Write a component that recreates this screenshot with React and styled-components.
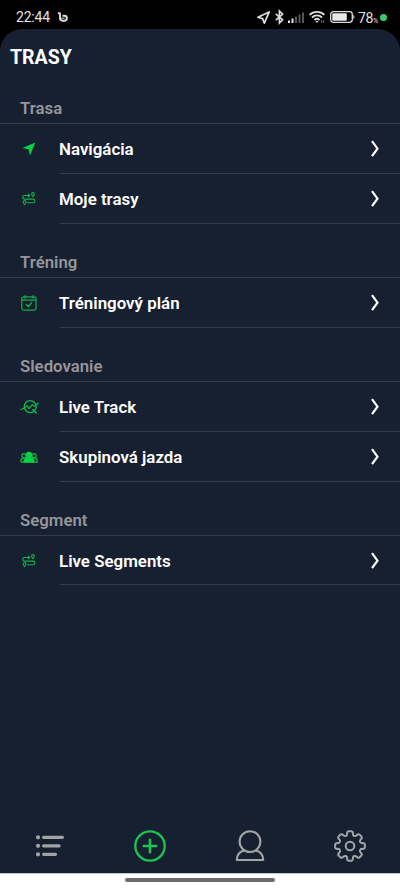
import React from 'react';
import styled, { createGlobalStyle } from 'styled-components';

const GREEN = '#06d445';
const GREY = '#a3a4a8';

const GlobalStyle = createGlobalStyle`
  * { box-sizing: border-box; }
  html, body { margin: 0; background: #000; }
  body { font-family: Roboto, "Liberation Sans", sans-serif; }
  svg { display: block; flex: none; overflow: visible; }
`;

const Screen = styled.div`
  width: 400px;
  height: 889px;
  display: flex;
  flex-direction: column;
  background: #000;
  overflow: hidden;
`;

const StatusBar = styled.header`
  height: 29px;
  flex: none;
  display: flex;
  align-items: center;
  justify-content: space-between;
  padding: 5px 13px 0 16px;
  color: #e2e2e2;
`;

const ClockGroup = styled.div`
  display: flex;
  align-items: center;
  gap: 8px;
`;

const DeviceGroup = styled.div`
  display: grid;
  grid-template-columns: 18px 13px 21px 21px 28px 22px 7px;
  align-items: center;
`;

const Clock = styled.span`
  font-size: 14px;
  line-height: 16px;
  width: 34px;
  letter-spacing: -0.2px;
`;

const Charge = styled.span`
  height: 16px;
  font-size: 14px;
  line-height: 18px;
  letter-spacing: -0.4px;
  white-space: nowrap;
  small { font-size: 7px; letter-spacing: 0; }
`;

const ActiveDot = styled.i`
  width: 7px;
  height: 7px;
  border-radius: 50%;
  background: #3ccb6c;
`;

const Panel = styled.main`
  height: 844px;
  flex: none;
  display: flex;
  flex-direction: column;
  background: #172030;
  border-radius: 22px 22px 0 0;
`;

const Title = styled.h1`
  margin: 0;
  padding: 17px 10px 0;
  height: 54px;
  color: #fff;
  font-size: 19.5px;
  font-weight: 700;
  line-height: 24px;
`;

const Section = styled.section`
  display: flex;
  flex-direction: column;
`;

const SectionTitle = styled.h2`
  margin: 0;
  height: ${(p) => (p.$first ? 41 : 54)}px;
  padding: 0 20px 5px;
  display: flex;
  align-items: flex-end;
  border-bottom: 1px solid #343c4a;
  color: #94969a;
  font-size: 16.8px;
  font-weight: 600;
  line-height: 20px;
`;

const Row = styled.div`
  height: ${(p) => p.$height || 50}px;
  display: grid;
  grid-template-columns: 59px 1fr;
  grid-template-rows: 100%;
`;

const RowIcon = styled.div`
  height: 50px;
  padding-right: 1px;
  display: flex;
  align-items: center;
  justify-content: center;
`;

const RowBody = styled.div`
  margin-left: 1px;
  padding: 15px 20px 0 0;
  display: flex;
  align-items: flex-start;
  justify-content: space-between;
  border-bottom: 1px solid #343c4a;
`;

const Label = styled.span`
  margin-left: -1px;
  color: #fff;
  font-size: 16.9px;
  font-weight: 600;
  line-height: 20px;
`;

const TabBar = styled.nav`
  margin-top: auto;
  height: 55px;
  display: grid;
  grid-template-columns: repeat(4, 1fr);
  align-items: center;
  justify-items: center;
`;

const HomeArea = styled.footer`
  height: 16px;
  flex: none;
  display: flex;
  justify-content: center;
  align-items: flex-start;
  padding-top: 4px;
  border-top: 1px solid #c4c6c9;
  background: #fff;
`;

const HomeHandle = styled.div`
  width: 150px;
  height: 4px;
  border-radius: 2px;
  background: #6c6c6c;
`;

const AppGlyph = () => (
  <svg width="11" height="10" viewBox="0 0 11 10" fill="none" stroke="#dedede" strokeWidth="1.9">
    <path d="M0 .8 2 1.5v5.2Q2.3 8.7 5 8.7h1.3a2.6 2.5 0 0 0 0-5H4.5" />
    <path d="M2 6.2h4.6" strokeWidth="1" />
  </svg>
);

const LocationIcon = () => (
  <svg width="13" height="13" viewBox="0 0 13 13" fill="none" stroke="#dedede" strokeWidth="1.7" strokeLinejoin="round">
    <path d="M12.2.9.9 6.2l4.7 1.4 1.8 4.6Z" />
  </svg>
);

const BluetoothIcon = () => (
  <svg width="9" height="14" viewBox="0 0 9 14" fill="none" stroke="#dedede" strokeWidth="1.6">
    <path d="m.8 3.8 6.8 6L4.4 13V1l3.2 3.2-6.8 6" />
  </svg>
);

const SignalIcon = () => (
  <svg width="16" height="11" viewBox="0 0 16 11">
    <path fill="#e5e5e5" d="M0 8.5h2V11H0zM3.5 6.5h2V11h-2z" />
    <path fill="#555" d="M7 4.5h2V11H7zM10.5 2.5h2V11h-2zM14 .5h2V11h-2z" />
  </svg>
);

const WifiIcon = () => (
  <svg width="16" height="12" viewBox="0 0 16 12" fill="none" stroke="#dedede" strokeWidth="1.8">
    <path d="M.6 3.8a10.7 10.7 0 0 1 14.8 0M3 6.5a7 7 0 0 1 10 0M5.4 9a3.8 3.8 0 0 1 5.2 0" />
    <path d="m6.4 10 1.6 2 1.6-2Z" fill="#dedede" stroke="none" />
    <path d="M12.6 9.2v2.6M14.6 9.2v2.6" stroke="#999" strokeWidth=".8" />
  </svg>
);

const BatteryIcon = () => (
  <svg width="25" height="12" viewBox="0 0 25 12">
    <rect x=".7" y=".7" width="21.6" height="10.6" rx="2.8" fill="none" stroke="#dcdcdc" strokeWidth="1.3" />
    <rect x="2.3" y="2.3" width="14.5" height="7.4" rx="1" fill="#e8e8e8" />
    <path d="M23.3 3.8q2.4 2.2 0 4.4Z" fill="#dcdcdc" />
  </svg>
);

const NavigateIcon = () => (
  <svg width="14" height="14" viewBox="0 0 14 14">
    <path d="M13.3.6.4 6l6.2 1.3L8 13.4Z" fill={GREEN} />
  </svg>
);

const RouteIcon = () => (
  <svg width="14" height="14" viewBox="0 0 14 14" fill="none" stroke="#12b348" strokeWidth="1.15" strokeLinejoin="round">
    <path d="M8.2 3.5H2.5a1.8 1.8 0 0 0 0 3.6h8.6a1.8 1.8 0 0 1 0 3.6H5" />
    <path d="m6 1.9 1.7 1.6L6 5.1" />
    <path d="M11 4.7Q9.6 3 9.6 2a1.4 1.4 0 0 1 2.8 0q0 1-1.4 2.7ZM2.6 12.8Q1.2 11 1.2 10A1.4 1.4 0 0 1 4 10q0 1-1.4 2.8Z" strokeWidth="1.05" />
  </svg>
);

const CalendarIcon = () => (
  <svg width="16" height="16" viewBox="0 0 16 16" fill="none" stroke="#10ae45" strokeWidth="1.25" strokeLinecap="round">
    <rect x=".8" y="1.8" width="14.2" height="13.2" rx="1.8" />
    <path d="M1 5.1h14M4 .6v2.6M12 .6v2.6" />
    <path d="m5.4 9.6 2 2 3.2-4" strokeWidth="1.4" />
  </svg>
);

const TrackIcon = () => (
  <svg width="19" height="14" viewBox="0 0 19 14" fill="none" stroke="#10bb48" strokeWidth="1.2" strokeLinejoin="round" strokeLinecap="round">
    <circle cx="10.2" cy="6.6" r="6" strokeWidth="1.35" />
    <path d="m.8 9.5 3.1-1.3 3.1-2.6 2.2 3 3-4 2.2 1.8 3.8-3.2" />
    <path d="m12.8 9.6 3.4 3.5" strokeWidth="1.5" />
  </svg>
);

const GroupIcon = () => (
  <svg width="18" height="11" viewBox="0 0 18 11" fill="none" stroke="#10bb48" strokeWidth="1.1">
    <circle cx="3.9" cy="3.7" r="2.1" />
    <circle cx="14.1" cy="3.7" r="2.1" />
    <path d="M.8 10V9q0-2.5 3.1-3.1M.8 10.1h16.4V9q0-2.5-3.1-3.1" />
    <path d="M6.4 5.4Q4.6-.3 9-.3t2.6 5.7q3 .6 3 5.1H3.4q0-4.5 3-5.1Z" fill={GREEN} stroke="none" />
  </svg>
);

const Chevron = () => (
  <svg width="10" height="19" viewBox="0 0 10 19" fill="none" stroke="#fff" strokeWidth="2.2">
    <path d="m2 2.2 5.5 7.5L2 17.2" />
  </svg>
);

const ListIcon = () => (
  <svg width="28" height="22" viewBox="0 0 28 22" stroke={GREY} strokeWidth="3.2" strokeLinecap="round">
    <path d="M7.6 2.3h18.8M7.6 10.8h15.5M7.6 19.3h11.9" />
    <path d="M2 2.3h.01M2 10.8h.01M2 19.3h.01" strokeWidth="4.2" />
  </svg>
);

const AddIcon = () => (
  <svg width="32" height="32" viewBox="0 0 32 32" fill="none" stroke="#1bc650" strokeLinecap="round">
    <circle cx="16" cy="16" r="14.7" strokeWidth="2.3" />
    <path d="M16 9.8v12.4M9.8 16h12.4" strokeWidth="2.6" />
  </svg>
);

const ProfileIcon = () => (
  <svg width="30" height="32" viewBox="0 0 30 32" fill="none" stroke={GREY} strokeWidth="2.1" strokeLinejoin="round">
    <circle cx="15" cy="11.6" r="10.4" />
    <path d="M9.4 20.4C4.5 21.5 1.8 25 1.8 30h26.4c0-5-2.7-8.5-7.6-9.6" />
  </svg>
);

const polar = (radius, degrees) => {
  const a = (degrees * Math.PI) / 180;
  return `${(16 + radius * Math.sin(a)).toFixed(2)} ${(16 - radius * Math.cos(a)).toFixed(2)}`;
};

const gearPath = Array.from({ length: 8 }, (_, i) => {
  const a = i * 45;
  return [
    `${i ? 'L' : 'M'}${polar(12.6, a - 13)}`,
    `Q${polar(14.9, a - 12.5)} ${polar(14.9, a - 5)}`,
    `L${polar(14.9, a + 5)}`,
    `Q${polar(14.9, a + 12.5)} ${polar(12.6, a + 13)}`,
    `C${polar(10.4, a + 17)} ${polar(10.4, a + 28)} ${polar(12.6, a + 32)}`,
  ].join('');
}).join('') + 'Z';

const GearIcon = () => (
  <svg width="32" height="32" viewBox="0 0 32 32" fill="none" stroke={GREY} strokeWidth="2" strokeLinejoin="round">
    <path d={gearPath} />
    <circle cx="16" cy="16" r="4.3" />
  </svg>
);

const sections = [
  { title: 'Trasa', rows: [['Navigácia', NavigateIcon], ['Moje trasy', RouteIcon]] },
  { title: 'Tréning', rows: [['Tréningový plán', CalendarIcon]] },
  { title: 'Sledovanie', rows: [['Live Track', TrackIcon], ['Skupinová jazda', GroupIcon]] },
  { title: 'Segment', rows: [['Live Segments', RouteIcon, 49]] },
];

export default function App() {
  return (
    <Screen>
      <GlobalStyle />
      <StatusBar>
        <ClockGroup>
          <Clock>22:44</Clock>
          <AppGlyph />
        </ClockGroup>
        <DeviceGroup>
          <LocationIcon />
          <BluetoothIcon />
          <SignalIcon />
          <WifiIcon />
          <BatteryIcon />
          <Charge>78<small>%</small></Charge>
          <ActiveDot />
        </DeviceGroup>
      </StatusBar>
      <Panel>
        <Title>TRASY</Title>
        {sections.map(({ title, rows }, index) => (
          <Section key={title}>
            <SectionTitle $first={index === 0}>{title}</SectionTitle>
            {rows.map(([label, Icon, height]) => (
              <Row key={label} $height={height}>
                <RowIcon><Icon /></RowIcon>
                <RowBody>
                  <Label>{label}</Label>
                  <Chevron />
                </RowBody>
              </Row>
            ))}
          </Section>
        ))}
        <TabBar>
          <ListIcon />
          <AddIcon />
          <ProfileIcon />
          <GearIcon />
        </TabBar>
      </Panel>
      <HomeArea><HomeHandle /></HomeArea>
    </Screen>
  );
}
